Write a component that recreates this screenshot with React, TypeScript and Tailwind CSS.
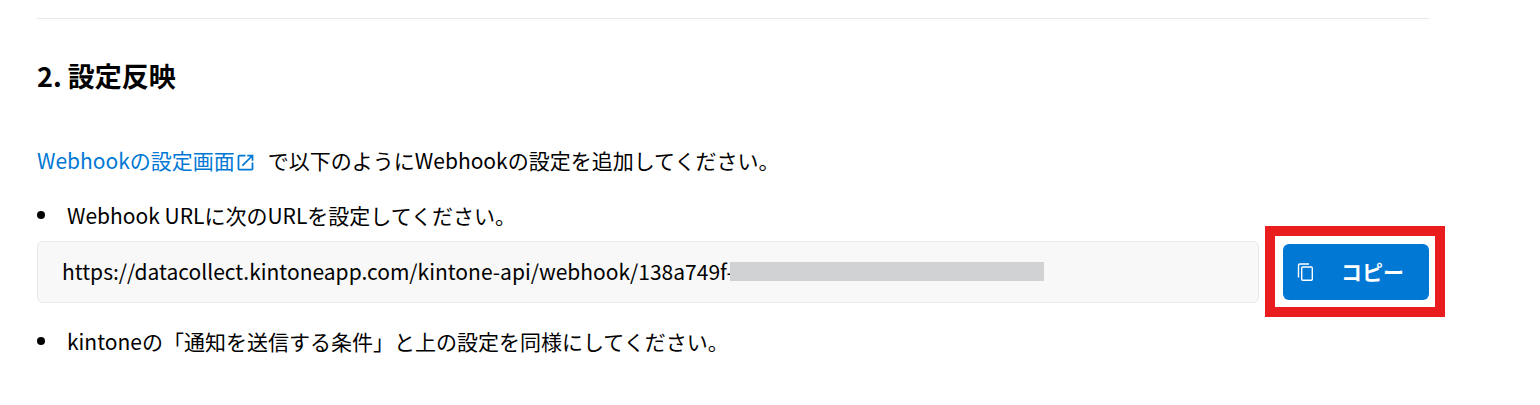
const font = { fontFamily: '"Noto Sans CJK JP", "Noto Sans", sans-serif' };

const CopyIcon = () => (
  <svg width="20" height="20" viewBox="0 0 20 20" fill="none" stroke="currentColor" strokeWidth="1.4">
    <path d="M2.5 15.5V3.5a1.5 1.5 0 0 1 1.5-1.5h9" />
    <rect x="5.7" y="5" width="10.6" height="13.3" rx="1" />
  </svg>
);

const ExternalIcon = () => (
  <svg className="inline-block align-[-4px]" width="21" height="21" viewBox="0 0 24 24" fill="currentColor">
    <path d="M19 19H5V5h7V3H5a2 2 0 0 0-2 2v14a2 2 0 0 0 2 2h14c1.1 0 2-.9 2-2v-7h-2v7zM14 3v2h3.59l-9.83 9.83 1.41 1.41L19 6.41V10h2V3h-7z" />
  </svg>
);

const Bullet = ({ children }: { children: React.ReactNode }) => (
  <div className="flex items-center text-[21px] leading-[30px] text-black">
    <span className="w-[8px] h-[8px] rounded-full bg-black mr-[22px] shrink-0" />
    {children}
  </div>
);

export default function App() {
  return (
    <div className="w-[1540px] h-[405px] bg-white overflow-hidden pl-[37px] pr-[111px] pt-[18px] text-black" style={font}>
      <div className="border-t border-[#e8e8e8]" />
      <h2 className="mt-[37px] text-[27px] leading-[40px] font-bold">2. 設定反映</h2>
      <p className="mt-[49px] text-[21px] leading-[30px]">
        <a className="text-[#0078d4]">
          Webhookの設定画面
          <ExternalIcon />
        </a>
        <span className="ml-[12px]">で以下のようにWebhookの設定を追加してください。</span>
      </p>
      <div className="mt-[25px]">
        <Bullet>Webhook URLに次のURLを設定してください。</Bullet>
      </div>
      <div className="mt-[11px] flex items-center gap-[24px]">
        <div className="relative flex-1 h-[62px] flex items-center px-[24px] bg-[#f8f8f8] border border-[#e9e9e9] rounded-[6px] text-[21px]">
          <span>https://datacollect.kintoneapp.com/kintone-api/webhook/138a749f-</span>
          <span className="absolute left-[692px] top-[20px] w-[314px] h-[19px] bg-[#d1d2d4]" />
        </div>
        <div className="relative">
          <button className="flex items-center w-[146px] h-[56px] pl-[13px] bg-[#0078d4] text-white rounded-[6px] text-[21px] font-bold">
            <CopyIcon />
            <span className="ml-[25px]">コピー</span>
          </button>
          <div className="absolute left-[-18px] top-[-18px] w-[180px] h-[91px] border-[10px] border-[#e91c1e]" />
        </div>
      </div>
      <div className="mt-[23px]">
        <Bullet>kintoneの「通知を送信する条件」と上の設定を同様にしてください。</Bullet>
      </div>
    </div>
  );
}
